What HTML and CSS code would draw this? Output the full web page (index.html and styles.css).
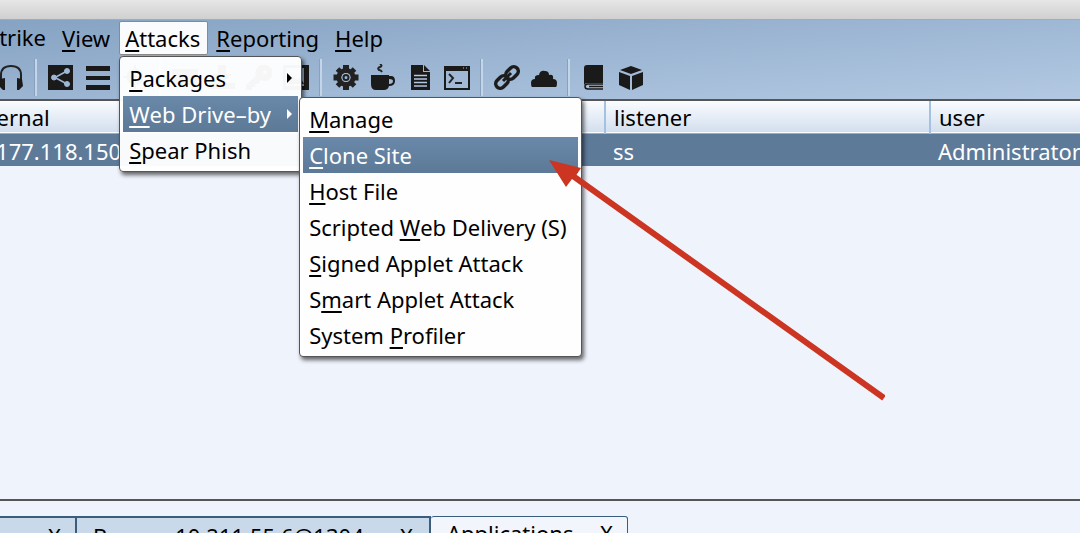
FILE: index.html
```
<!DOCTYPE html>
<html lang="en">

<head>
    <meta charset="UTF-8">
    <title>Cobalt Strike</title>
    <link rel="stylesheet" href="styles.css">
</head>

<body>

    <div class="titlebar"></div>

    <div class="top">
        <!-- Menu bar -->
        <nav class="menubar">
            <button class="menu-title first">Cobalt Strike</button>
            <button class="menu-title"><u>V</u>iew</button>
            <div class="menu-open">
                <button class="menu-title active"><u>A</u>ttacks</button>
                <ul class="popup">
                    <li><button class="item"><u>P</u>ackages <span class="arrow"></span></button></li>
                    <li>
                        <button class="item selected"><u>W</u>eb Drive–by <span class="arrow"></span></button>
                        <ul class="popup submenu">
                            <li><button class="item"><u>M</u>anage</button></li>
                            <li><button class="item selected"><u>C</u>lone Site</button></li>
                            <li><button class="item"><u>H</u>ost File</button></li>
                            <li><button class="item">Scripted <u>W</u>eb Delivery (S)</button></li>
                            <li><button class="item"><u>S</u>igned Applet Attack</button></li>
                            <li><button class="item">S<u>m</u>art Applet Attack</button></li>
                            <li><button class="item">System <u>P</u>rofiler</button></li>
                        </ul>
                    </li>
                    <li><button class="item"><u>S</u>pear Phish</button></li>
                </ul>
            </div>
            <button class="menu-title"><u>R</u>eporting</button>
            <button class="menu-title"><u>H</u>elp</button>
        </nav>

        <!-- Toolbar -->
        <div class="toolbar">
            <button class="tool" aria-label="Listeners">
                <svg viewBox="0 0 26 26"><path d="M3 19V11Q3 2 13 2T23 11V19" fill="none" stroke="#222" stroke-width="2"/><path d="M2 15l5-1v12H5l-4-4zM24 15l-5-1v12h2l4-4z"/></svg>
            </button>
            <span class="separator"></span>
            <button class="tool" aria-label="Pivot graph">
                <svg viewBox="0 0 26 26"><path d="M0 1h25v25H0z"/><g fill="#9db7d5" stroke="#9db7d5"><path d="M7 13.500L19 7M7 13.500L19 20" stroke-width="1.500"/><circle cx="6" cy="13.500" r="2.500"/><circle cx="19" cy="7" r="2.500"/><circle cx="19" cy="20" r="2.500"/></g></svg>
            </button>
            <button class="tool" aria-label="Session table">
                <svg viewBox="0 0 26 26"><path d="M1 2h24v5H1zM1 12h24v4H1zM1 21h24v5H1z"/></svg>
            </button>
            <button class="tool" aria-label="Targets">
                <svg viewBox="0 0 26 26"><path d="M13 1v24M1 13h24" stroke="#222" stroke-width="2"/><circle cx="13" cy="13" r="7" fill="none" stroke="#222" stroke-width="3"/></svg>
            </button>
            <span class="separator"></span>
            <button class="tool" aria-label="Keystrokes">
                <svg viewBox="0 0 26 26"><path d="M0 5h26v16H0z"/></svg>
            </button>
            <button class="tool" aria-label="Downloads">
                <svg viewBox="0 0 26 26"><path d="M9 1h8v9h6L13 19 3 10h6zM0 19h26v6H0z"/></svg>
            </button>
            <button class="tool" aria-label="Credentials">
                <svg viewBox="0 0 26 26"><path d="M17 1a8 8 0 0 0-7 11L0 21v5h6v-3h3v-3h3l3-4A8 8 0 1 0 17 1zm2 5a2 2 0 1 1 0 4 2 2 0 0 1 0-4z" fill-rule="evenodd"/></svg>
            </button>
            <button class="tool wide" aria-label="Screenshots">
                <svg viewBox="0 0 26 26"><path d="M0 1h26v25H0zM3 4v18h18V4z" fill-rule="evenodd"/><path d="M4 20l6-8 4 4 3-3 4 7z"/></svg>
            </button>
            <span class="separator"></span>
            <button class="tool" aria-label="Windows executable">
                <svg viewBox="0 0 26 26"><g stroke="#222" stroke-width="6"><path d="M13 1v7M13 19v7M.500 13.500h7M18.500 13.500h7"/><path d="M4.500 5l5 5M16.500 17l5 5M21.500 5l-5 5M9.500 17l-5 5" stroke-width="5"/></g><circle cx="13" cy="13.500" r="7" fill="none" stroke="#222" stroke-width="5"/><circle cx="13" cy="13.500" r="4.500" fill="#9db7d5"/><circle cx="13" cy="13.500" r="2.500" fill="none" stroke="#222" stroke-width="2"/></svg>
            </button>
            <button class="tool" aria-label="Java applet">
                <svg viewBox="0 0 26 26"><path d="M1 11h18v1h2q4 0 4 5t-6 5q-1 4-5 4H6q-5 0-5-6zM19 15v5q4 0 4-3 0-2-4-2z" fill-rule="evenodd"/><path d="M12 8q-1-2-3-2-2-2 1-3t0-3" fill="none" stroke="#222" stroke-width="2"/></svg>
            </button>
            <button class="tool" aria-label="Office macro">
                <svg viewBox="0 0 26 26"><path d="M4 1h12v7h7v18H4z"/><path d="M17 1l6 6h-6z"/><path d="M7 11.500h13M7 15h13M7 18.500h13M7 22h13" stroke="#b2c7e0" stroke-width="1.500"/></svg>
            </button>
            <button class="tool" aria-label="Scripted web delivery">
                <svg viewBox="0 0 26 26"><path d="M0 2h26v24H0zM2 7v17h22V7z" fill-rule="evenodd"/><path d="M19 4h1M22 4h1" stroke="#9db7d5"/><path d="M5 10l4 4-4 5M11 19h7" fill="none" stroke="#222" stroke-width="2"/></svg>
            </button>
            <span class="separator"></span>
            <button class="tool" aria-label="Host file">
                <svg viewBox="0 0 26 26"><g fill="none" stroke="#1c1c1c" stroke-width="3.500"><rect x="11" y="4.500" width="14" height="9" rx="4.500" transform="rotate(-45 18 9)"/><rect x="1" y="13.500" width="14" height="9" rx="4.500" transform="rotate(-45 8 18)"/><path d="M9 17l8-8" stroke-width="3"/></g></svg>
            </button>
            <button class="tool" aria-label="Manage sites">
                <svg viewBox="0 0 26 26"><path d="M1 23q-1-1-1-4 0-4 4-4-1-4 4-4 1-5 6-4 4 0 4 4 5-1 4 4 4 0 4 4 0 3-1 4z"/></svg>
            </button>
            <span class="separator"></span>
            <button class="tool" aria-label="Help">
                <svg viewBox="0 0 26 26"><path d="M6 1h16v18H7q-4 0-4 3V4q0-3 3-3z"/><path d="M22 20H7q-3 0-3 2.500T7 25h15M8 22.500h14" fill="none" stroke="#1a1a1a" stroke-width="1.500"/></svg>
            </button>
            <button class="tool" aria-label="About">
                <svg viewBox="0 0 26 26"><path d="M13 2l11 4-11 4L2 6zM1 8l11 4v14L1 21zM25 8l-11 4v14l11-5z"/></svg>
            </button>
        </div>
    </div>

    <!-- Sessions -->
    <main class="sessions">
        <table>
            <thead>
                <tr><th class="external">external</th><th class="internal"></th><th class="listener">listener</th><th>user</th></tr>
            </thead>
            <tbody>
                <tr><td>47.177.118.150</td><td></td><td>ss</td><td>Administrator</td></tr>
            </tbody>
        </table>
    </main>

    <!-- Tabs -->
    <footer class="tabs">
        <div class="tab tab-log"><button class="close">X</button></div>
        <div class="tab tab-beacon"><span>Beacon 10.211.55.6@1304</span><button class="close">X</button></div>
        <div class="tab tab-apps current"><span>Applications</span><button class="close">X</button></div>
    </footer>

    <!-- Red pointer to Clone Site -->
    <svg class="pointer" viewBox="0 0 336 242">
        <path d="M24 16L335 238" stroke="#cb3522" stroke-width="6"/>
        <path d="M0 0l32 8-6 9-3 2-6 8z" fill="#cb3522"/>
    </svg>

</body>

</html>
```
FILE: styles.css
```
* {
    box-sizing: border-box;
}

body {
    position: relative;
    display: flex;
    flex-direction: column;
    height: 100vh;
    margin: 0;
    overflow: hidden;
    background-color: #eff3fb;
    color: #000;
    font-family: "Noto Sans", "Lucida Grande", sans-serif;
    font-size: 22px;
    line-height: 32px;
}

button {
    padding: 0;
    border: none;
    background: none;
    color: inherit;
    font: inherit;
    white-space: nowrap;
}

u {
    text-decoration-thickness: 2px;
    text-underline-offset: 3px;
    text-decoration-skip-ink: none;
}

.titlebar {
    height: 20px;
    border-bottom: 1px solid #aaa;
    background: linear-gradient(#e6e6e6, #d0d0d0);
}

.top {
    background: linear-gradient(175deg, #86a3c3, #b3c9e3);
}

/* menu bar */
.menubar {
    display: flex;
    height: 36px;
    padding-top: 1px;
}

.menu-title {
    height: 34px;
    padding: 0 5px;
    border: 1px solid transparent;
    line-height: 30px;
}

.menu-title + .menu-title {
    margin-left: 4px;
}

.menu-title.first {
    display: flex;
    justify-content: flex-end;
    width: 52px;
}

.menu-open {
    position: relative;
    margin: 0 2px 0 3px;
}

.menu-title.active {
    padding: 0 7px 0 5px;
    border-color: #8a8a8a;
    border-radius: 2px;
    background-color: #fafbfd;
}

.popup {
    position: absolute;
    top: 35px;
    left: 0;
    z-index: 2;
    width: 183px;
    margin: 0;
    padding: 3px;
    border: 1px solid #555;
    border-radius: 4px;
    background-color: rgba(255, 255, 255, 0.96);
    box-shadow: 2px 3px 4px rgba(0, 0, 0, 0.6);
    list-style: none;
}

.popup li {
    position: relative;
}

.item {
    display: flex;
    align-items: center;
    width: 100%;
    height: 36px;
    padding: 0 6px 1px;
    white-space: pre;
}

.item.selected {
    background: linear-gradient(#6a88a9, #5c7997);
    color: #fff;
}

.arrow {
    margin-left: auto;
    border: 5px solid transparent;
    border-right: 0;
    border-left-color: currentColor;
}

.submenu {
    top: 1px;
    left: 176px;
    width: 283px;
    background-color: #fefefe;
}

/* toolbar */
.toolbar {
    display: flex;
    align-items: center;
    height: 43px;
    margin-left: -8px;
    padding-bottom: 1px;
}

.tool {
    display: flex;
    justify-content: center;
    width: 37px;
}

.tool svg {
    width: 26px;
    height: 26px;
    fill: #1a1a1a;
}

.separator {
    width: 3px;
    height: 37px;
    margin: 0 5px;
    border-left: 1px solid #87a1bf;
    border-right: 2px solid #c4d5e8;
}

/* sessions table */
.sessions {
    flex: 1;
    overflow: hidden;
    border-top: 2px solid #555;
}

table {
    width: calc(100% + 43px);
    margin-left: -43px;
    border-collapse: collapse;
    table-layout: fixed;
}

th,
td {
    height: 32px;
    padding: 0 0 0 8px;
    line-height: 30px;
    text-align: left;
    font-weight: normal;
    white-space: nowrap;
}

td {
    padding-top: 2px;
}

thead tr {
    background: linear-gradient(#fafcff, #d3dfee);
    border-bottom: 1px solid #8fb0cf;
}

.listener,
.listener + th {
    border-left: 2px solid #a3c1e0;
}

tbody tr {
    background-color: #5d7a99;
    color: #fff;
}

.external {
    width: 200px;
}

.internal {
    width: 448px;
}

.listener {
    width: 325px;
}

/* bottom tabs */
.tabs {
    display: flex;
    height: 34px;
    padding-top: 15px;
    overflow: hidden;
    border-top: 2px solid #555;
}

.tab {
    display: flex;
    justify-content: space-between;
    height: 40px;
    padding: 2px 16px 0;
    border: 2px solid #3b5d7d;
    border-left: 0;
    background-color: #c9d9e9;
}

.tab-log {
    justify-content: flex-end;
    width: 77px;
    padding-right: 14px;
}

.tab-beacon {
    width: 354px;
}

.tab-apps {
    width: 197px;
    padding-right: 14px;
}

.tab.current {
    padding-top: 0;
    border-width: 1px;
    border-radius: 3px 3px 0 0;
    background-color: #f2f5fb;
}

.close {
    height: 32px;
}

/* lies over the menus and the table */
.pointer {
    position: absolute;
    top: 160px;
    left: 549px;
    z-index: 3;
    width: 336px;
    height: 242px;
    pointer-events: none;
}
```
